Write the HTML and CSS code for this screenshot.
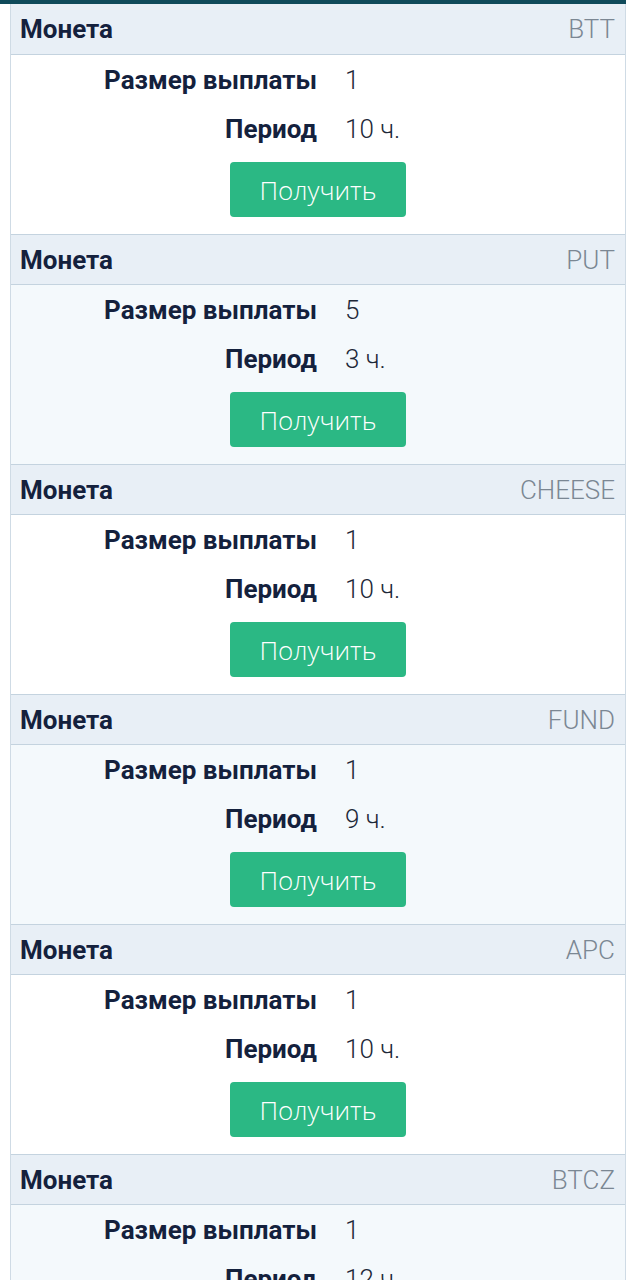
FILE: index.html
```html
<!DOCTYPE html>
<html lang="ru">
<head>
<meta charset="utf-8">
<link rel="stylesheet" href="styles.css">
</head>
<body>
<div class="topbar"></div>
<div class="list">
  <div class="item">
    <div class="head"><span class="h-label">Монета</span><span class="h-coin">BTT</span></div>
    <div class="body">
      <div class="row"><span class="label">Размер выплаты</span><span class="value">1</span></div>
      <div class="row"><span class="label">Период</span><span class="value">10 ч.</span></div>
      <div class="actions"><button class="btn">Получить</button></div>
    </div>
  </div>
  <div class="item alt">
    <div class="head"><span class="h-label">Монета</span><span class="h-coin">PUT</span></div>
    <div class="body">
      <div class="row"><span class="label">Размер выплаты</span><span class="value">5</span></div>
      <div class="row"><span class="label">Период</span><span class="value">3 ч.</span></div>
      <div class="actions"><button class="btn">Получить</button></div>
    </div>
  </div>
  <div class="item">
    <div class="head"><span class="h-label">Монета</span><span class="h-coin">CHEESE</span></div>
    <div class="body">
      <div class="row"><span class="label">Размер выплаты</span><span class="value">1</span></div>
      <div class="row"><span class="label">Период</span><span class="value">10 ч.</span></div>
      <div class="actions"><button class="btn">Получить</button></div>
    </div>
  </div>
  <div class="item alt">
    <div class="head"><span class="h-label">Монета</span><span class="h-coin">FUND</span></div>
    <div class="body">
      <div class="row"><span class="label">Размер выплаты</span><span class="value">1</span></div>
      <div class="row"><span class="label">Период</span><span class="value">9 ч.</span></div>
      <div class="actions"><button class="btn">Получить</button></div>
    </div>
  </div>
  <div class="item">
    <div class="head"><span class="h-label">Монета</span><span class="h-coin">APC</span></div>
    <div class="body">
      <div class="row"><span class="label">Размер выплаты</span><span class="value">1</span></div>
      <div class="row"><span class="label">Период</span><span class="value">10 ч.</span></div>
      <div class="actions"><button class="btn">Получить</button></div>
    </div>
  </div>
  <div class="item alt">
    <div class="head"><span class="h-label">Монета</span><span class="h-coin">BTCZ</span></div>
    <div class="body">
      <div class="row"><span class="label">Размер выплаты</span><span class="value">1</span></div>
      <div class="row"><span class="label">Период</span><span class="value">12 ч.</span></div>
      <div class="actions"><button class="btn">Получить</button></div>
    </div>
  </div>
</div>
</body>
</html>
```
FILE: styles.css
```css
html, body {
  margin: 0;
  padding: 0;
  background: #ffffff;
}
body {
  font-family: Roboto, "Noto Sans", sans-serif;
  color: #14213d;
  overflow: hidden;
  height: 1280px;
}
.topbar {
  width: 626px;
  height: 4px;
  background: #0f4a5a;
}
.list {
  width: 616px;
  margin-left: 10px;
  border-left: 1px solid #cfdbe5;
  border-right: 1px solid #cfdbe5;
  box-sizing: border-box;
}
.item {
  background: #ffffff;
}
.item.alt {
  background: #f4f9fc;
}
.head {
  display: flex;
  justify-content: space-between;
  align-items: center;
  height: 50px;
  padding: 0 10px 0 9px;
  background: #e8eff6;
  border-bottom: 1px solid #c4d3df;
}
.item + .item .head {
  border-top: 1px solid #c4d3df;
  height: 49px;
}
.h-label {
  font-weight: 700;
  font-size: 26px;
  color: #14213d;
}
.h-coin {
  font-weight: 300;
  font-size: 26px;
  color: #7b8793;
}
.body {
  padding: 0 0 17px;
}
.row {
  display: grid;
  grid-template-columns: 306px 1fr;
  column-gap: 28px;
  height: 49px;
  align-items: center;
}
.label {
  text-align: right;
  font-weight: 700;
  font-size: 26px;
  color: #14213d;
}
.value {
  font-weight: 300;
  font-size: 26px;
  color: #1d2838;
}
.actions {
  display: flex;
  justify-content: center;
  padding-top: 9px;
}
.btn {
  width: 176px;
  height: 55px;
  border: none;
  border-radius: 4px;
  background: #2bb884;
  color: #ffffff;
  font-family: "Open Sans", Roboto, sans-serif;
  font-weight: 300;
  font-size: 26px;
  padding: 0;
}
```
